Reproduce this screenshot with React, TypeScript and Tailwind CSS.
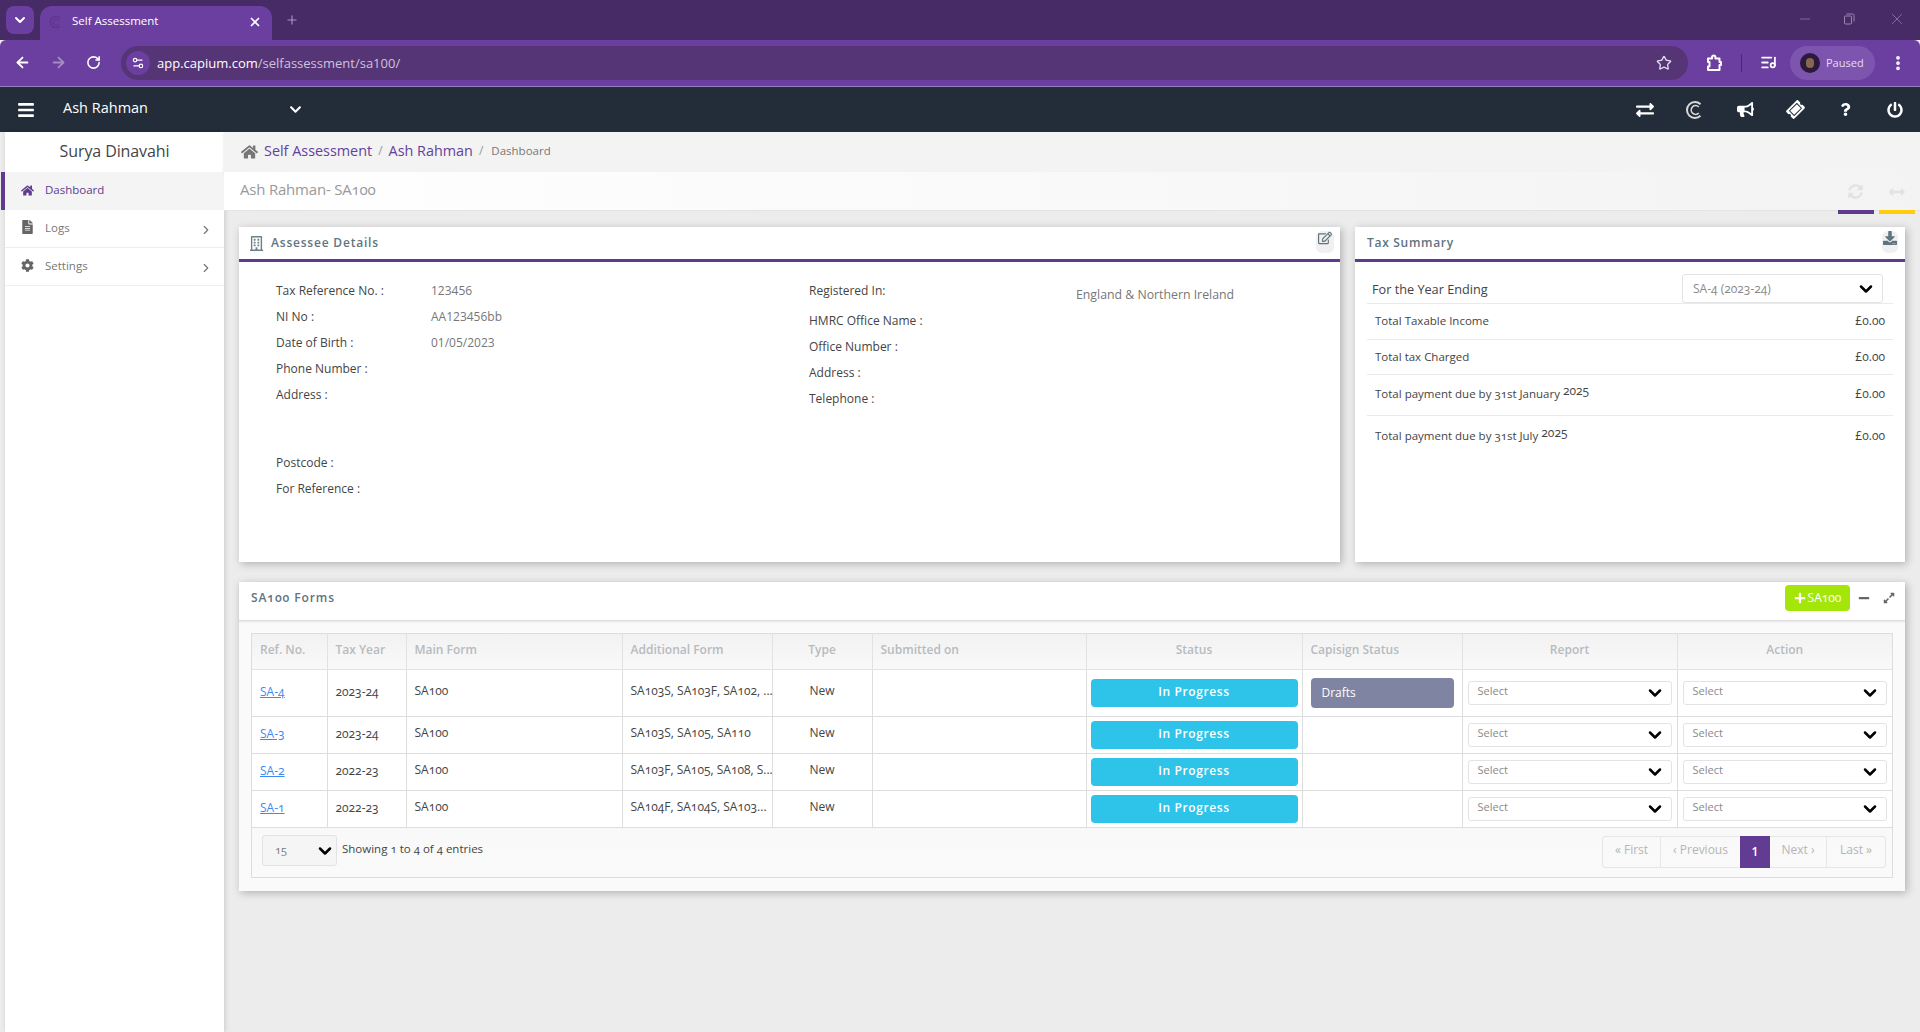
import {
  FaBars, FaChevronDown, FaCog, FaDownload, FaExchangeAlt, FaExpandAlt, FaFileAlt, FaHome,
  FaBullhorn, FaMinus, FaPlus, FaPowerOff, FaQuestion, FaRegBuilding, FaRegEdit, FaSyncAlt, FaTicketAlt, FaArrowsAltH,
} from 'react-icons/fa';
import { ArrowLeft, ArrowRight, ChevronDown, ChevronRight, EllipsisVertical, ListMusic, Minus, Plus, RotateCw, Settings2, Star, X } from 'lucide-react';

const leftFields = [
  { label: 'Tax Reference No. :', value: '123456', h: 'h-[26px]' },
  { label: 'NI No :', value: 'AA123456bb', h: 'h-[26px]' },
  { label: 'Date of Birth :', value: '01/05/2023', h: 'h-[26px]' },
  { label: 'Phone Number :', value: '', h: 'h-[26px]' },
  { label: 'Address :', value: '', h: 'h-[68px]' },
  { label: 'Postcode :', value: '', h: 'h-[26px]' },
  { label: 'For Reference :', value: '', h: 'h-[26px]' },
];

const rightFields = ['HMRC Office Name :', 'Office Number :', 'Address :', 'Telephone :'];

const summaryRows = [
  { label: 'Total Taxable Income', sup: '', h: 'h-[36px] pb-[2px]' },
  { label: 'Total tax Charged', sup: '', h: 'h-[35px]' },
  { label: 'Total payment due by 31st January', sup: '2025', h: 'h-[41px] pb-[2px]' },
  { label: 'Total payment due by 31st July', sup: '2025', h: 'h-[41px] pb-[2px]' },
];

const forms = [
  { ref: 'SA-4', year: '2023-24', extra: 'SA103S, SA103F, SA102, ...', drafts: true, h: 'h-[47px]' },
  { ref: 'SA-3', year: '2023-24', extra: 'SA103S, SA105, SA110', drafts: false, h: 'h-[37px]' },
  { ref: 'SA-2', year: '2022-23', extra: 'SA103F, SA105, SA108, S...', drafts: false, h: 'h-[37px]' },
  { ref: 'SA-1', year: '2022-23', extra: 'SA104F, SA104S, SA103...', drafts: false, h: 'h-[37px]' },
];

const columns = [
  { name: 'Ref. No.', w: 'w-[75px]', c: 'text-left' },
  { name: 'Tax Year', w: 'w-[79px]', c: 'text-left' },
  { name: 'Main Form', w: 'w-[216px]', c: 'text-left' },
  { name: 'Additional Form', w: 'w-[150px]', c: 'text-left' },
  { name: 'Type', w: 'w-[100px]', c: 'text-center' },
  { name: 'Submitted on', w: 'w-[214px]', c: 'text-left' },
  { name: 'Status', w: 'w-[216px]', c: 'text-center' },
  { name: 'Capisign Status', w: 'w-[160px]', c: 'text-left' },
  { name: 'Report', w: 'w-[215px]', c: 'text-center' },
  { name: 'Action', w: 'w-[215px]', c: 'text-center' },
];

function CapiumIcon({ className }: { className?: string }) {
  return (
    <svg viewBox="0 0 20 20" fill="none" stroke="currentColor" className={className}>
      <path d="M15.5 4.2A8 8 0 1 0 15.5 15.8" strokeWidth="2" />
      <path d="M13.8 7A4.4 4.4 0 1 0 13.8 13" strokeWidth="1.5" />
    </svg>
  );
}

function ExtensionIcon({ className }: { className?: string }) {
  return (
    <svg viewBox="0 0 18 18" fill="none" stroke="currentColor" strokeWidth="2" strokeLinejoin="round" className={className}>
      <path d="M3 4.5H7V3.2A1.7 1.7 0 0 1 10.4 3.2V4.5H14.5V8H16V11H14.5V16H3V12.5H4.5V8H3Z" />
    </svg>
  );
}

function RestoreIcon({ className }: { className?: string }) {
  return (
    <svg viewBox="0 0 12 12" fill="none" stroke="currentColor" strokeWidth="1" className={className}>
      <rect x="1.5" y="3" width="7" height="8" rx="1" />
      <path d="M3.5 1H9.5A1.5 1.5 0 0 1 11 2.5V8.5" />
    </svg>
  );
}

function SelectBox({ label }: { label: string }) {
  return (
    <div className="h-6 bg-white border border-[#e3e3e3] rounded-[3px] flex items-center justify-between pl-[9px] pr-[6px]">
      <span className="text-[11px] text-[#8a8a8a] -mt-[2px]">{label}</span>
      <ChevronDown className="w-5 h-5 text-black" strokeWidth={3} />
    </div>
  );
}

export default function App() {
  return (
    <div className="w-[1920px] h-[1032px] overflow-hidden flex flex-col bg-[#ececec] font-['Open_Sans','Noto_Sans',sans-serif] text-[12px] text-[#444]">
      {/* browser tab strip */}
      <div className="h-10 bg-[#472b66] flex items-end pl-[6px] shrink-0">
        <div className="w-7 h-7 mb-[6px] bg-[#6b3fa0] rounded-lg flex items-center justify-center text-white">
          <ChevronDown className="w-4 h-4" strokeWidth={3} />
        </div>
        <div className="ml-[6px] w-[232px] h-[34px] bg-[#6b3fa0] rounded-t-xl flex items-center pl-[9px] pr-[10px] text-white">
          <CapiumIcon className="w-[14px] h-[14px] text-[#5d3590] -mt-[3px]" />
          <span className="ml-[9px] text-[11.5px] flex-1 -mt-[4px]">Self Assessment</span>
          <X className="w-[14px] h-[14px] -mt-[3px]" strokeWidth={3} />
        </div>
        <Plus className="w-[14px] h-[14px] ml-[13px] mb-[13px] text-[#a793bd]" strokeWidth={2} />
        <div className="ml-auto flex items-center mb-[12px] text-[#9a86b0]">
          <Minus className="w-4 h-4 mr-[30px]" strokeWidth={1} />
          <RestoreIcon className="w-[12px] h-[12px] mr-[33px]" />
          <X className="w-[18px] h-[18px] mr-[14px]" strokeWidth={1} />
        </div>
      </div>

      {/* browser toolbar */}
      <div className="h-[47px] bg-[#6b3fa0] border-b border-[#9a7cc0] flex items-start pt-[6px] shrink-0 rounded-t-md text-white">
        <ArrowLeft className="w-[17px] h-[17px] ml-[14px] mt-[8px]" strokeWidth={2.5} />
        <ArrowRight className="w-[17px] h-[17px] ml-[19px] mt-[8px] text-[#a48bc2]" strokeWidth={2.5} />
        <RotateCw className="w-[15px] h-[15px] ml-[19px] mt-[9px]" strokeWidth={2.5} />
        <div className="ml-[20px] w-[1567px] h-[34px] rounded-full bg-[#553575] flex items-center pl-[5px] pr-[16px]">
          <div className="w-6 h-6 rounded-full bg-[#6b3fa0] flex items-center justify-center">
            <Settings2 className="w-[14px] h-[14px]" />
          </div>
          <span className="ml-[7px] text-[13px] pt-px">app.capium.com<span className="text-[#cfc2de]">/selfassessment/sa100/</span></span>
          <Star className="ml-auto w-4 h-4 text-[#e2daeb]" strokeWidth={2} />
        </div>
        <ExtensionIcon className="w-[18px] h-[18px] ml-[17px] mt-[8px]" />
        <div className="w-px h-[18px] bg-[#472b66] ml-[18px] mt-[8px]" />
        <ListMusic className="w-[17px] h-[17px] ml-[18px] mt-[8px]" strokeWidth={2.5} />
        <div className="ml-[13px] w-[85px] h-[34px] rounded-full bg-[#7d55ae] flex items-center pl-[10px]">
          <div className="w-5 h-5 rounded-full bg-[#2a1a3c] flex items-center justify-center">
            <div className="w-2 h-[10px] rounded-full bg-[#8a6650]" />
          </div>
          <span className="ml-[6px] text-[11px] text-[#e6ddf0]">Paused</span>
        </div>
        <EllipsisVertical className="w-[18px] h-[18px] ml-[14px] mt-[8px]" strokeWidth={3} />
      </div>

      {/* app header */}
      <header className="h-[45px] bg-[#232d3a] flex items-center text-white shrink-0">
        <FaBars className="w-4 h-[18px] ml-[18px]" />
        <span className="ml-[29px] text-[14.5px] w-[226px] -mt-[4px]">Ash Rahman</span>
        <FaChevronDown className="w-[13px] h-[13px]" />
        <div className="ml-auto flex items-center">
          <div className="w-[50px] flex justify-center"><FaExchangeAlt className="w-[18px] h-[18px]" /></div>
          <div className="w-[50px] flex justify-center"><CapiumIcon className="w-5 h-5 text-[#d8d8d8]" /></div>
          <div className="w-[50px] flex justify-center"><FaBullhorn className="w-[17px] h-[17px]" /></div>
          <div className="w-[50px] flex justify-center"><FaTicketAlt className="w-[17px] h-[17px] -rotate-45" /></div>
          <div className="w-[50px] flex justify-center"><FaQuestion className="w-[13px] h-[13px]" /></div>
          <div className="w-[50px] flex justify-center"><FaPowerOff className="w-[16px] h-[16px]" /></div>
        </div>
      </header>

      <div className="flex flex-1 min-h-0">
        {/* sidebar */}
        <aside className="w-[224px] shrink-0 pl-[5px]">
          <div className="h-full bg-white shadow-[1px_0_5px_rgba(0,0,0,0.15)] relative">
            <div className="h-10 flex items-center justify-center text-[16px] text-[#444] -tracking-[0.1px] pb-[2px]">Surya Dinavahi</div>
            <div className="h-[38px] bg-[#f4f4f4] flex items-center pl-[16px] text-[#5f3b8f] relative">
              <div className="absolute left-[-4px] top-0 bottom-0 w-[4px] bg-[#5f3b8f]" />
              <FaHome className="w-[13px] h-[13px] -mt-[2px]" />
              <span className="ml-[11px] text-[11.5px] -mt-[2px]">Dashboard</span>
            </div>
            <div className="h-[38px] border-b border-[#eee] flex items-center pl-[16px] text-[#777]">
              <FaFileAlt className="w-[13px] h-[14px] text-[#666] -mt-[3px]" />
              <span className="ml-[11px] -mt-[1px] text-[11.5px]">Logs</span>
              <ChevronRight className="ml-auto mr-[11px] w-[14px] h-[14px] mt-[3px]" />
            </div>
            <div className="h-[38px] border-b border-[#eee] flex items-center pl-[16px] text-[#777]">
              <FaCog className="w-[13px] h-[13px] text-[#666] -mt-[3px]" />
              <span className="ml-[11px] -mt-[1px] text-[11.5px]">Settings</span>
              <ChevronRight className="ml-auto mr-[11px] w-[14px] h-[14px] mt-[3px]" />
            </div>
          </div>
        </aside>

        <main className="flex-1 min-w-0">
          {/* breadcrumb */}
          <div className="h-10 bg-[#f3f3f3] shadow-[0_1px_3px_rgba(0,0,0,0.12)] flex items-center pl-[17px] relative">
            <FaHome className="w-[17px] h-[16px] text-[#777] -mt-px" />
            <a className="ml-[6px] text-[14.4px] text-[#64419a] -mt-[3px]">Self Assessment</a>
            <span className="mx-[6px] text-[#999] -mt-[2px]">/</span>
            <a className="text-[14.4px] text-[#64419a] -mt-[3px]">Ash Rahman</a>
            <span className="mx-[6px] text-[#999] -mt-[2px]">/</span>
            <span className="ml-[2px] text-[11.5px] text-[#777] -mt-[2px]">Dashboard</span>
          </div>

          {/* title bar */}
          <div className="h-[39px] bg-gradient-to-r from-white to-[#f3f3f3] border-b border-[#e3e3e3] flex items-center pl-4 relative">
            <h1 className="text-[15px] text-[#9a9a9a] oldstyle-nums -tracking-[0.2px] -mt-[4px]">Ash Rahman- SA100</h1>
            <FaSyncAlt className="absolute left-[1624px] top-[12px] w-[15px] h-[15px] text-[#e2e2e2]" />
            <FaArrowsAltH className="absolute left-[1665px] top-[12px] w-[16px] h-[16px] text-[#e2e2e2]" />
            <div className="absolute left-[1614px] -bottom-[4px] w-[36px] h-[4px] bg-[#5f3b8f]" />
            <div className="absolute left-[1655px] -bottom-[4px] w-[36px] h-[4px] bg-[#ffcd0d]" />
          </div>

          <div className="pt-4 pl-[15px] pr-[15px]">
            <div className="flex gap-[15px] h-[335px]">
              {/* assessee details */}
              <div className="w-[1101px] bg-white shadow-[2px_2px_8px_rgba(0,0,0,0.25)]">
                <div className="h-[35px] border-b-[3px] border-[#5f3b8f] flex items-center justify-between pl-[11px] pr-[6px]">
                  <div className="flex items-center gap-[8px]">
                    <FaRegBuilding className="w-[13px] h-[15px] text-[#6d7f88]" />
                    <h3 className="text-[12px] font-semibold tracking-[0.8px] text-[#5f7480]">Assessee Details</h3>
                  </div>
                  <div className="w-[18px] h-[22px] bg-[#f0f0f0] rounded-md flex justify-center -mt-[2px]">
                    <FaRegEdit className="w-[14px] h-[14px] text-[#5f7480]" />
                  </div>
                </div>
                <div className="flex pt-4 pl-[37px]">
                  <div className="w-[533px]">
                    {leftFields.map((f) => (
                      <div key={f.label} className={`flex leading-[26px] ${f.h}`}>
                        <span className="w-[155px]">{f.label}</span>
                        <span className="text-[#777]">{f.value}</span>
                      </div>
                    ))}
                  </div>
                  <div>
                    <div className="flex h-[30px] leading-[26px]">
                      <span className="w-[267px]">Registered In:</span>
                      <span className="mt-[4px] text-[12.3px] text-[#777]">England &amp; Northern Ireland</span>
                    </div>
                    {rightFields.map((f) => (
                      <div key={f} className="h-[26px] leading-[26px]">{f}</div>
                    ))}
                  </div>
                </div>
              </div>

              {/* tax summary */}
              <div className="flex-1 bg-white shadow-[2px_2px_8px_rgba(0,0,0,0.25)]">
                <div className="h-[35px] border-b-[3px] border-[#5f3b8f] flex items-center justify-between pl-[12px] pr-[7px]">
                  <h3 className="text-[12px] font-semibold tracking-[0.7px] text-[#5f7480]">Tax Summary</h3>
                  <div className="w-[16px] h-[22px] bg-[#f0f0f0] rounded-md flex justify-center -mt-[2px]">
                    <FaDownload className="w-[14px] h-[14px] text-[#5f7480]" />
                  </div>
                </div>
                <div className="px-3 pt-3">
                  <div className="h-[30px] border-b border-[#e8ecf1] flex items-center pl-[5px] pr-[10px]">
                    <span className="text-[12.7px] pt-[2px]">For the Year Ending</span>
                    <div className="ml-auto w-[201px] h-[29px] bg-white border border-[#e3e3e3] rounded-[3px] flex items-center justify-between pl-[10px] pr-[6px]">
                      <span className="text-[12px] text-[#8a8a8a] oldstyle-nums">SA-4 (2023-24)</span>
                      <ChevronDown className="w-5 h-5 text-black" strokeWidth={3} />
                    </div>
                  </div>
                  {summaryRows.map((r, i) => (
                    <div key={r.label} className={`flex items-center justify-between pl-2 pr-2 ${r.h} ${i < 3 ? 'border-b border-[#e8ecf1]' : ''}`}>
                      <span className="text-[11.5px] oldstyle-nums">{r.label} {r.sup && <sup className="text-[12px] top-[-3px]">{r.sup}</sup>}</span>
                      <span className="oldstyle-nums">£0.00</span>
                    </div>
                  ))}
                </div>
              </div>
            </div>

            {/* SA100 forms */}
            <div className="mt-5 h-[309px] bg-[#fafafa] shadow-[2px_2px_8px_rgba(0,0,0,0.25)]">
              <div className="h-[39px] bg-white border-b border-[#ddd] shadow-[0_1px_2px_rgba(0,0,0,0.08)] flex items-center justify-between pl-3 pr-[10px]">
                <h3 className="text-[12px] font-semibold tracking-[0.9px] text-[#5f7480] oldstyle-nums -mt-[6px]">SA100 Forms</h3>
                <div className="flex items-center -mt-[6px]">
                  <button className="w-[65px] h-[26px] bg-[#a5e60a] rounded-[4px] flex items-center justify-center text-white text-[12px] oldstyle-nums">
                    <FaPlus className="w-3 h-3 mr-[2px]" />SA100
                  </button>
                  <FaMinus className="w-3 h-3 ml-2 text-[#666]" />
                  <FaExpandAlt className="w-3 h-3 ml-[13px] text-[#666]" />
                </div>
              </div>
              <div className="mx-3 mt-3 border border-[#ddd] h-[245px] bg-gradient-to-b from-[#f3f3f3] to-[#fafafa]">
                <table className="w-full table-fixed border-collapse bg-white">
                  <colgroup>
                    {columns.map((c) => <col key={c.name} className={c.w} />)}
                  </colgroup>
                  <thead>
                    <tr className="h-[35px] bg-gradient-to-b from-[#f2f2f2] to-[#f9f9f9]">
                      {columns.map((c) => (
                        <th key={c.name} className={`border-x border-b border-[#e2e2e2] first:border-l-0 last:border-r-0 px-2 pb-[2px] font-semibold text-[#b7bbc0] ${c.c}`}>{c.name}</th>
                      ))}
                    </tr>
                  </thead>
                  <tbody>
                    {forms.map((f) => (
                      <tr key={f.ref} className={`${f.h} oldstyle-nums`}>
                        <td className="border-b border-r border-[#ddd] px-2 pb-[2px]"><a className="text-[#3b8bf0] underline">{f.ref}</a></td>
                        <td className="border border-[#ddd] px-2 pb-[2px]">{f.year}</td>
                        <td className="border border-[#ddd] px-2 pb-[4px]">SA100</td>
                        <td className="border border-[#ddd] px-2 pb-[4px] whitespace-nowrap overflow-hidden">{f.extra}</td>
                        <td className="border border-[#ddd] px-2 pb-[4px] text-center">New</td>
                        <td className="border border-[#ddd] px-2" />
                        <td className="border border-[#ddd] px-[4px]">
                          <div className="h-7 bg-[#2ec3e9] rounded-[4px] flex items-center justify-center text-white font-semibold tracking-[0.6px] pb-[2px]">In Progress</div>
                        </td>
                        <td className="border border-[#ddd] px-2">
                          {f.drafts && <div className="h-[30px] bg-[#7f84a3] rounded-[4px] flex items-center pl-[11px] text-white">Drafts</div>}
                        </td>
                        <td className="border border-[#ddd] px-[5px]"><SelectBox label="Select" /></td>
                        <td className="border-b border-l border-[#ddd] px-[5px]"><SelectBox label="Select" /></td>
                      </tr>
                    ))}
                  </tbody>
                </table>
                <div className="flex items-center justify-between pl-[10px] pr-[6px] pt-[6px]">
                  <div className="flex items-center">
                    <div className="w-[75px] h-[31px] bg-[#f5f5f5] border border-[#e3e3e3] rounded-[3px] flex items-center justify-between pl-3 pr-[1px]">
                      <span className="text-[11px] text-[#777] oldstyle-nums">15</span>
                      <ChevronDown className="w-5 h-5 text-black" strokeWidth={3} />
                    </div>
                    <span className="ml-[5px] -mt-[3px] text-[11.5px] oldstyle-nums">Showing 1 to 4 of 4 entries</span>
                  </div>
                  <div className="flex h-8 mt-[2px] border border-[#e6e6e6] rounded-[3px] text-[#b5b5b5]">
                    <span className="w-[58px] pb-[3px] flex items-center justify-center border-r border-[#e6e6e6]">« First</span>
                    <span className="w-[79px] pb-[3px] flex items-center justify-center">‹ Previous</span>
                    <span className="w-[30px] -my-px flex items-center justify-center bg-[#623c92] text-white font-semibold">1</span>
                    <span className="w-[57px] pb-[3px] flex items-center justify-center border-r border-[#e6e6e6]">Next ›</span>
                    <span className="w-[58px] pb-[3px] flex items-center justify-center">Last »</span>
                  </div>
                </div>
              </div>
            </div>
          </div>
        </main>
      </div>
    </div>
  );
}
